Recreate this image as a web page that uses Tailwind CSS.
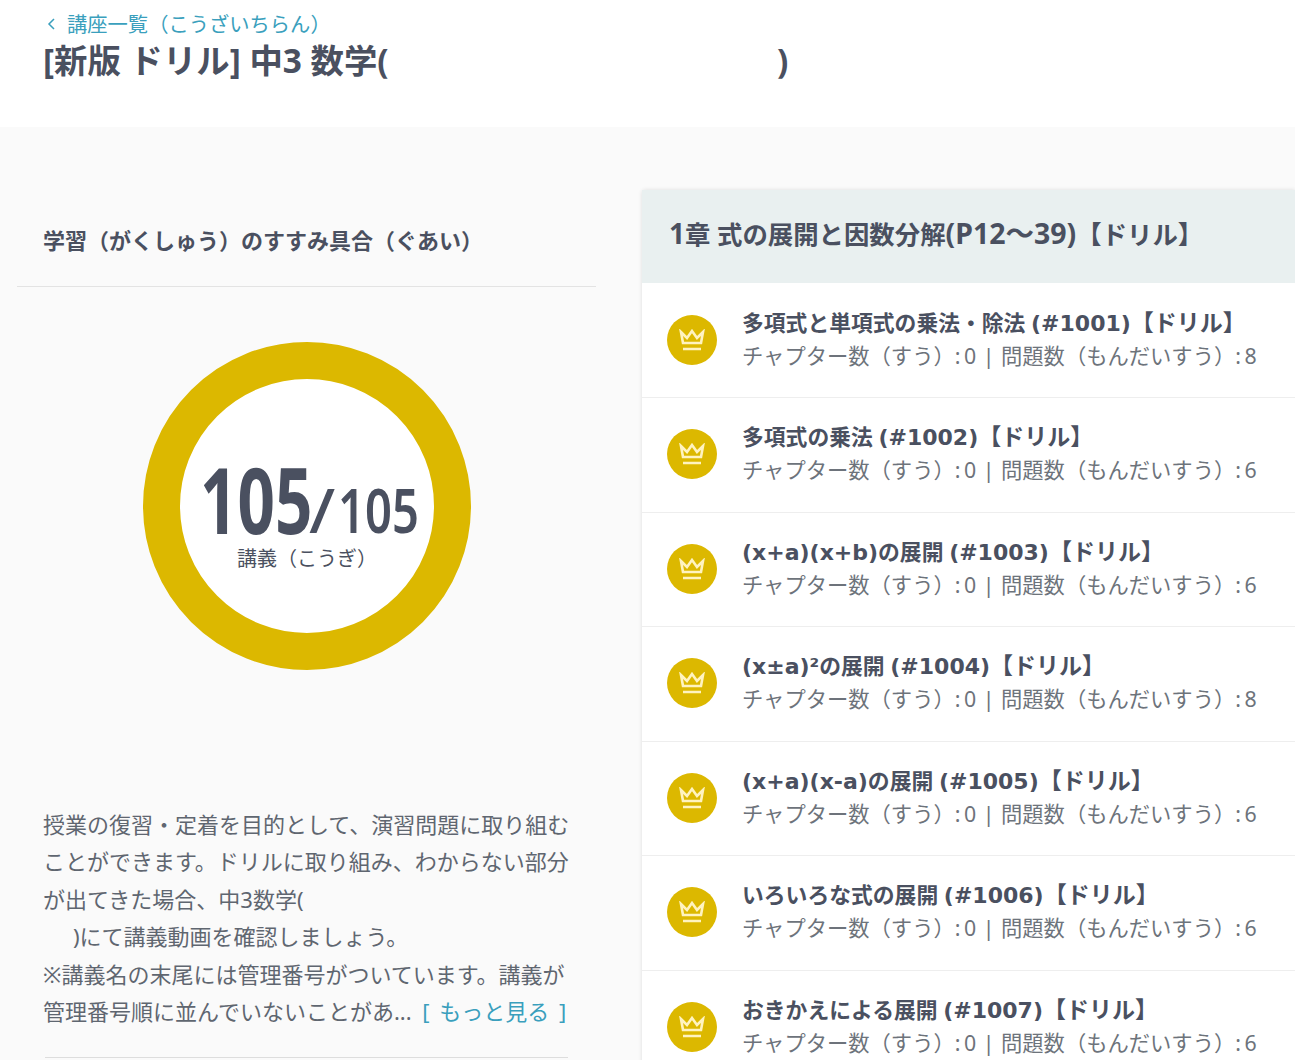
<!DOCTYPE html>
<html lang="ja">
<head>
  <meta charset="UTF-8">
  <title>[新版 ドリル] 中3 数学</title>
  <script src="https://cdn.jsdelivr.net/npm/@tailwindcss/browser@4"></script>
</head>
<body class="h-[1060px] overflow-hidden bg-[#fafafa] font-['Noto_Sans','Noto_Sans_CJK_JP',sans-serif] text-[#4a5060]">
  <!-- header -->
  <header class="h-[127px] bg-white pl-[43px] pt-[10px]">
    <a class="flex h-[28px] items-center text-[20.3px] leading-[28px] text-[#3a9fbd]">
      <svg class="mr-[11px] ml-[3px] h-[14px] w-[10px]" viewBox="0 0 10 14" fill="none" stroke="currentColor" stroke-width="1.5"><path d="M8 2 L3 7 L8 12"/></svg>
      <span>講座一覧（こうざいちらん）</span>
    </a>
    <h1 class="flex h-[44px] items-center text-[33.4px] font-bold leading-[44px] whitespace-nowrap">
      <span class="w-[345px]">[新版 ドリル] 中3 数学(</span>
      <span class="ml-[389px]">)</span>
    </h1>
  </header>

  <main class="flex items-start">
    <!-- progress column -->
    <section class="ml-[17px] w-[579px]">
      <h2 class="flex h-[160px] items-end border-b border-[#e3e3e3] pb-[30px] pl-[26px] text-[22px] font-bold leading-[32px] whitespace-nowrap">学習（がくしゅう）のすすみ具合（ぐあい）</h2>
      <div class="mt-[55px] ml-[126px] flex h-[328px] w-[328px] flex-col items-center rounded-full border-[37px] border-[#dcb800] bg-white">
        <div class="mt-[84px] ml-[2px] flex h-[72px] w-[216px] items-end whitespace-nowrap">
          <span class="w-[109px] origin-bottom-left scale-x-[0.72] text-[91px] font-bold leading-[72px]">105</span>
          <span class="w-[29px] origin-bottom-left scale-x-[1.1] text-[62px] font-medium leading-[52px]">/</span>
          <span class="w-[78px] origin-bottom-left scale-x-[0.76] text-[62px] font-semibold leading-[52px]">105</span>
        </div>
        <p class="mt-[10px] text-[20px] leading-[28px] whitespace-nowrap">講義（こうぎ）</p>
      </div>
      <div class="mt-[136px] ml-[26px] w-[530px] text-[22px] leading-[37.4px] text-[#5f6670]">
        授業の復習・定着を目的として、演習問題に取り組むことができます。ドリルに取り組み、わからない部分が出てきた場合、中3数学(<br>
        <span class="ml-[30px]">)にて講義動画を確認しましょう。</span><br>
        ※講義名の末尾には管理番号がついています。講義が管理番号順に並んでいないことがあ... <a class="ml-[5px] text-[#3a9fbd] [word-spacing:4px]">[ もっと見る ]</a>
      </div>
      <div class="mt-[27px] ml-[28px] h-px w-[523px] bg-[#dddddd]"></div>
    </section>

    <!-- chapter card -->
    <section class="mt-[63px] ml-[46px] flex-1 rounded-tl-[4px] bg-white shadow-[0_0_4px_rgba(0,0,0,0.12)]">
      <h2 class="h-[93px] bg-[#e9f0f0] pt-[23px] pl-[27px] text-[25.4px] leading-[40px] font-bold whitespace-nowrap"><span class="text-[28px]">1</span>章 式の展開と因数分解<span class="text-[28.5px]">(P12～39)</span>【ドリル】</h2>
      <ul class="pt-[0.5px]">
        <li class="flex h-[114.5px] items-center border-b border-[#eeeeee] pl-[25px]">
          <span class="-mt-[1px] flex h-[50px] w-[50px] shrink-0 items-center justify-center rounded-full bg-[#dcb800]"><svg class="h-[22px] w-[28px]" viewBox="0 0 28 22" fill="none" stroke="#fff3c0" stroke-width="2.6"><path d="M3 3 L5 14 H23 L25 3 L19 9 L14 2 L9 9 Z M5 20 H23"/></svg></span>
          <div class="ml-[25px] -mt-[3px] whitespace-nowrap"><p class="text-[21.8px] leading-[32px] font-bold">多項式と単項式の乗法・除法 <span class="font-['DejaVu_Sans'] text-[22px]">(#1001)</span><span class="text-[23px]">【ドリル】</span></p><p class="text-[21.3px] leading-[32px] text-[#6d737b] [word-spacing:1px]">チャプター数（すう）:&#8201;0 | 問題数（もんだいすう）:&#8201;8</p></div>
        </li>
        <li class="flex h-[114.5px] items-center border-b border-[#eeeeee] pl-[25px]">
          <span class="-mt-[1px] flex h-[50px] w-[50px] shrink-0 items-center justify-center rounded-full bg-[#dcb800]"><svg class="h-[22px] w-[28px]" viewBox="0 0 28 22" fill="none" stroke="#fff3c0" stroke-width="2.6"><path d="M3 3 L5 14 H23 L25 3 L19 9 L14 2 L9 9 Z M5 20 H23"/></svg></span>
          <div class="ml-[25px] -mt-[3px] whitespace-nowrap"><p class="text-[21.8px] leading-[32px] font-bold">多項式の乗法 <span class="font-['DejaVu_Sans'] text-[22px]">(#1002)</span><span class="text-[23px]">【ドリル】</span></p><p class="text-[21.3px] leading-[32px] text-[#6d737b] [word-spacing:1px]">チャプター数（すう）:&#8201;0 | 問題数（もんだいすう）:&#8201;6</p></div>
        </li>
        <li class="flex h-[114.5px] items-center border-b border-[#eeeeee] pl-[25px]">
          <span class="-mt-[1px] flex h-[50px] w-[50px] shrink-0 items-center justify-center rounded-full bg-[#dcb800]"><svg class="h-[22px] w-[28px]" viewBox="0 0 28 22" fill="none" stroke="#fff3c0" stroke-width="2.6"><path d="M3 3 L5 14 H23 L25 3 L19 9 L14 2 L9 9 Z M5 20 H23"/></svg></span>
          <div class="ml-[25px] -mt-[3px] whitespace-nowrap"><p class="text-[21.8px] leading-[32px] font-bold"><span class="font-['DejaVu_Sans'] text-[22px]">(x+a)(x+b)</span>の展開 <span class="font-['DejaVu_Sans'] text-[22px]">(#1003)</span><span class="text-[23px]">【ドリル】</span></p><p class="text-[21.3px] leading-[32px] text-[#6d737b] [word-spacing:1px]">チャプター数（すう）:&#8201;0 | 問題数（もんだいすう）:&#8201;6</p></div>
        </li>
        <li class="flex h-[114.5px] items-center border-b border-[#eeeeee] pl-[25px]">
          <span class="-mt-[1px] flex h-[50px] w-[50px] shrink-0 items-center justify-center rounded-full bg-[#dcb800]"><svg class="h-[22px] w-[28px]" viewBox="0 0 28 22" fill="none" stroke="#fff3c0" stroke-width="2.6"><path d="M3 3 L5 14 H23 L25 3 L19 9 L14 2 L9 9 Z M5 20 H23"/></svg></span>
          <div class="ml-[25px] -mt-[3px] whitespace-nowrap"><p class="text-[21.8px] leading-[32px] font-bold"><span class="font-['DejaVu_Sans'] text-[22px]">(x±a)²</span>の展開 <span class="font-['DejaVu_Sans'] text-[22px]">(#1004)</span><span class="text-[23px]">【ドリル】</span></p><p class="text-[21.3px] leading-[32px] text-[#6d737b] [word-spacing:1px]">チャプター数（すう）:&#8201;0 | 問題数（もんだいすう）:&#8201;8</p></div>
        </li>
        <li class="flex h-[114.5px] items-center border-b border-[#eeeeee] pl-[25px]">
          <span class="-mt-[1px] flex h-[50px] w-[50px] shrink-0 items-center justify-center rounded-full bg-[#dcb800]"><svg class="h-[22px] w-[28px]" viewBox="0 0 28 22" fill="none" stroke="#fff3c0" stroke-width="2.6"><path d="M3 3 L5 14 H23 L25 3 L19 9 L14 2 L9 9 Z M5 20 H23"/></svg></span>
          <div class="ml-[25px] -mt-[3px] whitespace-nowrap"><p class="text-[21.8px] leading-[32px] font-bold"><span class="font-['DejaVu_Sans'] text-[22px]">(x+a)(x-a)</span>の展開 <span class="font-['DejaVu_Sans'] text-[22px]">(#1005)</span><span class="text-[23px]">【ドリル】</span></p><p class="text-[21.3px] leading-[32px] text-[#6d737b] [word-spacing:1px]">チャプター数（すう）:&#8201;0 | 問題数（もんだいすう）:&#8201;6</p></div>
        </li>
        <li class="flex h-[114.5px] items-center border-b border-[#eeeeee] pl-[25px]">
          <span class="-mt-[1px] flex h-[50px] w-[50px] shrink-0 items-center justify-center rounded-full bg-[#dcb800]"><svg class="h-[22px] w-[28px]" viewBox="0 0 28 22" fill="none" stroke="#fff3c0" stroke-width="2.6"><path d="M3 3 L5 14 H23 L25 3 L19 9 L14 2 L9 9 Z M5 20 H23"/></svg></span>
          <div class="ml-[25px] -mt-[3px] whitespace-nowrap"><p class="text-[21.8px] leading-[32px] font-bold">いろいろな式の展開 <span class="font-['DejaVu_Sans'] text-[22px]">(#1006)</span><span class="text-[23px]">【ドリル】</span></p><p class="text-[21.3px] leading-[32px] text-[#6d737b] [word-spacing:1px]">チャプター数（すう）:&#8201;0 | 問題数（もんだいすう）:&#8201;6</p></div>
        </li>
        <li class="flex h-[114.5px] items-center border-b border-[#eeeeee] pl-[25px]">
          <span class="-mt-[1px] flex h-[50px] w-[50px] shrink-0 items-center justify-center rounded-full bg-[#dcb800]"><svg class="h-[22px] w-[28px]" viewBox="0 0 28 22" fill="none" stroke="#fff3c0" stroke-width="2.6"><path d="M3 3 L5 14 H23 L25 3 L19 9 L14 2 L9 9 Z M5 20 H23"/></svg></span>
          <div class="ml-[25px] -mt-[3px] whitespace-nowrap"><p class="text-[21.8px] leading-[32px] font-bold">おきかえによる展開 <span class="font-['DejaVu_Sans'] text-[22px]">(#1007)</span><span class="text-[23px]">【ドリル】</span></p><p class="text-[21.3px] leading-[32px] text-[#6d737b] [word-spacing:1px]">チャプター数（すう）:&#8201;0 | 問題数（もんだいすう）:&#8201;6</p></div>
        </li>
      </ul>
    </section>
  </main>
</body>
</html>
